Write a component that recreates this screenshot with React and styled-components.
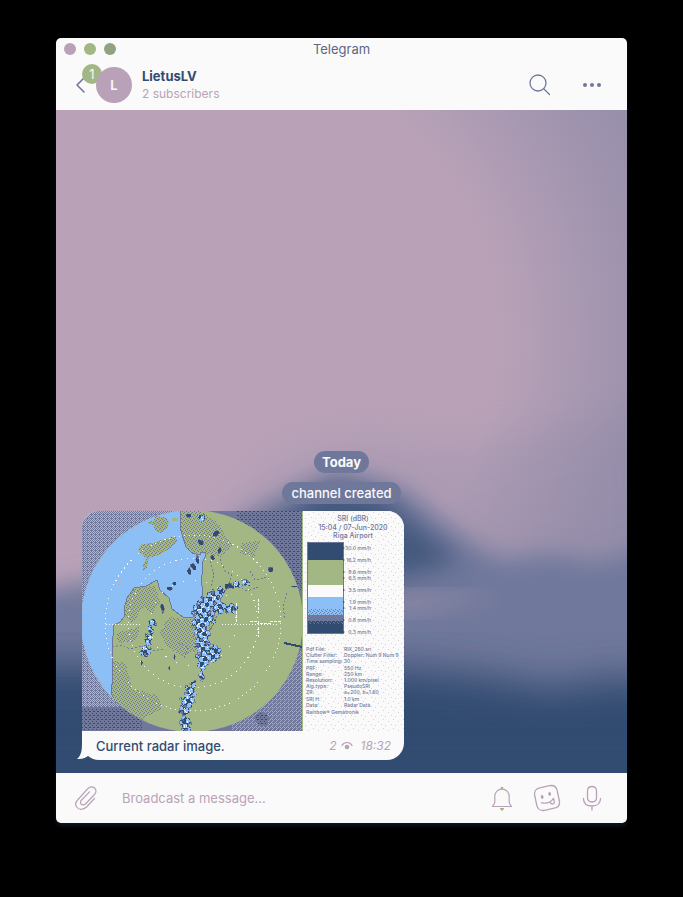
import React from "react";
import styled, { createGlobalStyle, ThemeProvider } from "styled-components";

const theme = {
  paper: "#fafafa",
  mauve: "#b9a2b8",
  slate: "#6f789b",
  navy: "#324b71",
  green: "#a3b785",
  sky: "#8cbff5",
  font: 'Inter, "Liberation Sans", sans-serif',
};

const GlobalStyle = createGlobalStyle`
  * { box-sizing: border-box; }
  body { margin: 0; background: #000; font-family: ${theme.font}; }
  button { border: 0; padding: 0; background: none; font: inherit; color: inherit; cursor: pointer; }
  h1, h2, p { margin: 0; font: inherit; }
  svg { display: block; }
`;

const Desktop = styled.div`
  min-height: 100vh;
  display: flex;
  padding: 38px 56px 74px;
`;

const Window = styled.div`
  flex: 1;
  min-width: 0;
  display: flex;
  flex-direction: column;
  border-radius: 5px;
  overflow: hidden;
  background: ${(p) => p.theme.paper};
  box-shadow: 0 4px 4px -1px rgba(50, 75, 113, 0.3);
`;

const TitleBar = styled.div`
  display: grid;
  grid-template-columns: 1fr auto 1fr;
  align-items: center;
  height: 22px;
  padding: 0 8px;
  color: #5f6682;
  font-size: 13px;
  line-height: 22px;
`;

const Lights = styled.div`
  display: flex;
  gap: 8px;
`;

const Light = styled.button`
  width: 12px;
  height: 12px;
  border-radius: 50%;
  background: ${(p) => p.$fill};
`;

const Header = styled.header`
  display: flex;
  align-items: center;
  height: 50px;
  padding: 0 23px 0 18px;
`;

const BackButton = styled.button`
  position: relative;
  width: 22px;
  height: 36px;
  display: flex;
  align-items: center;
  color: ${(p) => p.theme.slate};
`;

const Badge = styled.span`
  position: absolute;
  left: 8px;
  top: -3px;
  width: 20px;
  height: 20px;
  border-radius: 50%;
  background: ${(p) => p.theme.green};
  color: ${(p) => p.theme.paper};
  font-size: 13px;
  line-height: 20px;
  text-align: center;
`;

const Avatar = styled.div`
  position: relative;
  width: 36px;
  height: 36px;
  border-radius: 50%;
  background: ${(p) => p.theme.mauve};
  color: ${(p) => p.theme.paper};
  font-size: 13px;
  font-weight: 600;
  line-height: 36px;
  text-align: center;
`;

const Identity = styled.div`
  flex: 1;
  margin-left: 10px;
  padding-bottom: 2px;
`;

const ChannelName = styled.h1`
  color: ${(p) => p.theme.navy};
  font-size: 13px;
  font-weight: 700;
  line-height: 18px;
`;

const Subscribers = styled.p`
  color: ${(p) => p.theme.mauve};
  font-size: 12px;
  line-height: 17px;
`;

const Actions = styled.div`
  display: flex;
  gap: 28px;
  color: ${(p) => p.theme.slate};
`;

const IconButton = styled.button`
  width: ${(p) => p.$size || 24}px;
  height: 28px;
  display: grid;
  place-items: center;
  flex: none;
`;

const Chat = styled.main`
  position: relative;
  isolation: isolate;
  flex: 1;
  display: flex;
  flex-direction: column;
  justify-content: flex-end;
  padding: 0 26px 13px;
`;

const Wallpaper = styled.svg`
  position: absolute;
  inset: 0;
  z-index: -1;
  width: 100%;
  height: 100%;
`;

const Pill = styled.p`
  align-self: center;
  margin-bottom: ${(p) => p.$gap}px;
  padding: 0 ${(p) => p.$pad}px;
  border-radius: 11px;
  background: ${(p) => p.theme.slate};
  color: ${(p) => p.theme.paper};
  font-size: 13px;
  font-weight: ${(p) => p.$weight};
  line-height: 22px;
`;

const Bubble = styled.article`
  position: relative;
  align-self: flex-start;
  width: 322px;
  max-width: 100%;
  border-radius: 17px;
  background: ${(p) => p.theme.paper};
`;

const Tail = styled.svg`
  position: absolute;
  left: -5px;
  bottom: 0;
`;

const Picture = styled.svg`
  position: relative;
  width: 100%;
  height: auto;
  border-radius: 17px 17px 0 0;
`;

const CaptionRow = styled.div`
  display: flex;
  align-items: center;
  justify-content: space-between;
  height: 29px;
  padding: 0 13px 0 14px;
`;

const Caption = styled.p`
  color: ${(p) => p.theme.navy};
  font-size: 13px;
  font-weight: 500;
  line-height: 18px;
`;

const Meta = styled.div`
  display: flex;
  align-items: center;
  gap: 4px;
  color: ${(p) => p.theme.mauve};
  font-size: 12px;
  font-style: italic;
  line-height: 18px;
`;

const Time = styled.time`
  margin-left: 4px;
`;

const Composer = styled.form`
  display: flex;
  align-items: center;
  height: 50px;
  padding: 0 23px 0 18px;
  color: ${(p) => p.theme.mauve};
`;

const MessageInput = styled.input`
  flex: 1;
  min-width: 0;
  margin: 0 16px 0 24px;
  padding: 0;
  border: 0;
  outline: 0;
  background: none;
  color: ${(p) => p.theme.navy};
  font: 13px/20px ${(p) => p.theme.font};
  &::placeholder { color: ${(p) => p.theme.mauve}; opacity: 1; }
`;

const Tools = styled.div`
  display: flex;
  gap: 18px;
`;

const stroke = { fill: "none", stroke: "currentColor", strokeLinecap: "round", strokeLinejoin: "round" };

function ChatWallpaper() {
  return (
    <Wallpaper viewBox="0 0 571 663" preserveAspectRatio="none" aria-hidden="true">
      <defs>
        <radialGradient id="haze" gradientUnits="userSpaceOnUse" cx="150" cy="230" r="500">
          <stop offset="0.58" stopColor={theme.slate} stopOpacity="0" />
          <stop offset="0.84" stopColor={theme.slate} stopOpacity="0.34" />
          <stop offset="1" stopColor={theme.slate} stopOpacity="0.5" />
        </radialGradient>
        <filter id="soft" x="-20%" y="-20%" width="140%" height="140%"><feGaussianBlur stdDeviation="12" /></filter>
        <filter id="softer" x="-20%" y="-20%" width="140%" height="140%"><feGaussianBlur stdDeviation="20" /></filter>
      </defs>
      <rect width="571" height="663" fill={theme.mauve} />
      <rect width="571" height="500" fill="url(#haze)" />
      <path d="M150 430 L220 350 L300 325 L400 335 L600 300 V480 H150Z" fill={theme.slate} opacity="0.16" filter="url(#softer)" />
      <path d="M-60 490 L120 455 L200 400 L285 360 L350 382 L410 430 L445 449 L500 444 L540 453 L630 430 V720 H-60Z" fill={theme.slate} filter="url(#soft)" />
      <path d="M180 440 L270 376 L325 386 L360 415 L405 452 L330 470 L180 480Z" fill={theme.navy} opacity="0.7" filter="url(#soft)" />
      <path d="M335 482 L450 486 L340 505Z" fill={theme.mauve} opacity="0.45" filter="url(#soft)" />
      <path d="M-60 555 H330 L430 565 L500 578 L540 568 L630 570 V720 H-60Z" fill={theme.navy} filter="url(#softer)" />
      <path d="M-60 620 H630 V720 H-60Z" fill={theme.navy} filter="url(#soft)" />
    </Wallpaper>
  );
}

/* Rain cells: x, y, horizontal radius, vertical radius */
const CELLS = [
  [131, 86, 8, 8], [125, 92, 9, 8], [119, 99, 10, 9], [136, 96, 9, 7], [147, 97, 8, 5], [117, 112, 8, 9],
  [125, 107, 9, 8], [120, 122, 9, 9], [120, 134, 8, 9], [131, 142, 8, 9], [122, 146, 9, 8],
  [120, 153, 5, 7], [119, 164, 3, 6], [111, 173, 3, 5], [108, 180, 6, 8], [105, 190, 8, 8], [102, 199, 6, 5],
  [103, 213, 6, 9], [148, 74, 4, 3], [154, 73, 5, 4], [163, 71, 5, 4], [188, 58, 3, 3], [70, 111, 5, 4],
  [68, 119, 3, 6], [66, 128, 4, 7], [63, 139, 6, 6], [115, 48, 2, 4], [111, 55, 3, 4], [107, 60, 2, 4], [87, 77, 4, 2],
  [92, 72, 2, 2], [80, 97, 2, 5], [119, 6, 4, 4], [118, 31, 3, 3], [134, 22, 4, 3],
  [106, 4, 3, 2], [137, 39, 2, 3], [130, 46, 2, 3], [92, 146, 1, 3], [87, 157, 1, 2], [138, 80, 4, 5],
  [212, 75, 3, 1], [144, 75, 2, 3], [59, 151, 1, 3],
];

function seeded(seed) {
  let s = seed;
  return () => {
    s = (s * 16807) % 2147483647;
    return s / 2147483647;
  };
}

function buildEcho() {
  const next = seeded(4127);
  const layers = { navy: "", sky: "", slate: "", paper: "" };
  CELLS.forEach(([cx, cy, rx, ry]) => {
    const big = rx * ry > 14;
    for (let y = -ry; y <= ry; y += 1) {
      for (let x = -rx; x <= rx; x += 1) {
        const px = cx + x;
        const py = cy + y;
        const rough = Math.sin(px * 0.9 + py * 0.5) + Math.cos(py * 0.8 - px * 0.6);
        const d = (x * x) / (rx * rx) + (y * y) / (ry * ry) + rough * 0.25 + next() * 0.35;
        if (d > 1.05) continue;
        let key = d > 0.8 ? "slate" : "navy";
        if (big && d < 0.7 && rough + next() < 0.5) key = "sky";
        if (big && d < 0.3 && next() > 0.78) key = "paper";
        layers[key] += `M${px} ${py}h1v1h-1z`;
      }
    }
  });
  return layers;
}

const ECHO = buildEcho();

const SCALE = [
  [37, "30.0 mm/h"], [49, "16.2 mm/h"], [61, "8.6 mm/h"], [67, "6.5 mm/h"], [79, "3.5 mm/h"],
  [91, "1.9 mm/h"], [97, "1.4 mm/h"], [109, "0.8 mm/h"], [121, "0.3 mm/h"],
];

const DETAILS = [
  ["Pdf File:", "RIX_250.sri"], ["Clutter Filter:", "Doppler: Num 9 Num 9"], ["Time sampling: 30", ""],
  ["PRF:", "550 Hz"], ["Range:", "250 km"], ["Resolution:", "1.000 km/pixel"], ["Alg.type:", "PseudoSRI"],
  ["ZR:", "a=200, b=1.60"], ["SRI H:", "1.0 km"], ["Data:", "Radar Data"],
];

const SEA = "M-2 -2H99L98 6L99 20L104 36L110 42L118 44L119 41L123 41L123 46L120 52L121 60L119 68L121 82L120 90L114 98L111 106L101 106L90 98L87 87L78 79L75 69L64 75L52 77L45 87L42 98L42 106L38 111L32 114L30 136L31 165L29 182L36 196L36 222H-2Z";
const ISLANDS = "M65 12L72 9L74 5L82 6L87 11L85 18L78 22L73 19L72 14ZM56 39L59 33L70 32L82 28L94 25L95 31L87 38L78 44L67 47L65 57L61 60L61 53L65 47L60 44Z";

function RadarPicture() {
  return (
    <Picture viewBox="0 0 322 220" role="img" aria-label="Weather radar map of Riga Airport with rain intensity scale">
      <defs>
        <pattern id="dotSky" width="4" height="4" patternUnits="userSpaceOnUse"><path d="M0 0h1v1h-1zM2 0h1v1h-1zM1 1h1v1h-1zM3 1h1v1h-1zM0 2h1v1h-1zM2 2h1v1h-1zM3 3h1v1h-1z" fill={theme.sky} /></pattern>
        <pattern id="dotSlate" width="4" height="4" patternUnits="userSpaceOnUse"><path d="M0 0h1v1h-1zM2 1h1v1h-1zM1 2h1v1h-1zM3 3h1v1h-1z" fill={theme.slate} /></pattern>
        <pattern id="dotNavy" width="4" height="4" patternUnits="userSpaceOnUse"><path d="M0 0h1v1h-1zM2 2h1v1h-1zM3 0h1v1h-1z" fill={theme.navy} /></pattern>
        <pattern id="dotGreen" width="4" height="4" patternUnits="userSpaceOnUse"><path d="M0 0h1v1h-1zM2 2h1v1h-1zM2 0h1v1h-1zM1 3h1v1h-1zM3 1h1v1h-1z" fill={theme.green} /></pattern>
        <pattern id="dotMauve" width="10" height="9" patternUnits="userSpaceOnUse"><path d="M1 1h1v1h-1zM6 3h1v1h-1zM3 7h1v1h-1zM9 6h1v1h-1z" fill={theme.mauve} /></pattern>
        <clipPath id="scope"><circle cx="110" cy="110" r="111" /></clipPath>
        <clipPath id="frame"><rect width="221" height="220" /></clipPath>
      </defs>
      <rect width="322" height="220" fill={theme.paper} />
      <g clipPath="url(#frame)" shapeRendering="crispEdges">
        <rect width="221" height="220" fill={theme.slate} />
        <rect width="100" height="196" fill="url(#dotSky)" />
        <rect x="155" width="66" height="80" fill="url(#dotNavy)" />
        <rect y="198" width="60" height="22" fill="url(#dotNavy)" />
        <rect x="150" y="140" width="71" height="80" fill="url(#dotGreen)" />
        <circle cx="180" cy="208" r="7" fill={theme.slate} />
        <circle cx="180" cy="208" r="6" fill="url(#dotNavy)" />
        <g clipPath="url(#scope)">
          <rect width="222" height="222" fill={theme.green} />
          <path d="M99 0H118L136 12L150 34L138 46L122 42L108 42L99 22ZM52 78L72 74L78 90L70 105L62 96L50 112L42 104L45 88ZM86 106L100 108L114 108L114 140L100 146L84 134L78 122ZM30 150L44 152L50 178L76 184L80 198L58 210L30 196ZM34 122L58 116L54 130L36 132ZM160 32L178 30L172 46L158 42Z" fill="url(#dotSlate)" />
          <path d={SEA} fill={theme.sky} stroke={theme.slate} strokeWidth="1" />
          <path d="M90 7H96V10H90Z" fill={theme.green} />
          <path d={ISLANDS} fill={theme.green} />
          <path d={ISLANDS} fill="url(#dotSlate)" />
          <path d="M30 136l10 -2l8 4l12 -3l9 5l14 -2M138 48l5 12l7 4l-3 9M142 80l10 -6l13 6l12 -4M168 60l5 9l14 -3M205 82l-4 12l2 15M128 50l4 14l-3 11M96 132l10 4l-4 12" fill="none" stroke={theme.slate} strokeDasharray="2 2" />
          <g fill="none" stroke={theme.paper}>
            <circle cx="111" cy="112" r="88" strokeDasharray="1 4" />
            <circle cx="111" cy="112" r="65" strokeDasharray="1 5" />
            <circle cx="111" cy="112" r="43" strokeDasharray="1 11" />
            <path d="M24 113H58M140 113H196" strokeDasharray="1 2" />
            <path d="M168 110h8v2h13M188 110h12M154 92v20M176 88v14M176 116v10" strokeDasharray="3 1" />
          </g>
          <path d="M196 112h24M200 110h12" stroke={theme.mauve} strokeDasharray="2 1" />
          <path d="M36 74l4 -4M190 138l8 4M180 160l-12 10M70 120l5 14" stroke={theme.mauve} strokeDasharray="1 2" />
          <circle cx="110" cy="110" r="110" fill="none" stroke={theme.mauve} strokeDasharray="1 6" />
        </g>
        <path d={ECHO.slate} fill={theme.slate} />
        <path d={ECHO.navy} fill={theme.navy} />
        <path d={ECHO.sky} fill={theme.sky} />
        <path d={ECHO.paper} fill={theme.paper} />
        <path d="M202 132l5 1l13 3" fill="none" stroke={theme.navy} strokeWidth="2" />
        <path d="M220 0V220" stroke={theme.green} />
      </g>
      <rect x="222" y="0" width="100" height="220" fill="url(#dotMauve)" opacity="0.5" />
      <g fontFamily={theme.font} fill={theme.slate} fontWeight="500">
        <g fontSize="7" textAnchor="middle">
          <text x="271" y="10">SRI (dBR)</text>
          <text x="271" y="19">15:04 / 07-Jun-2020</text>
          <text x="271" y="27">Riga Airport</text>
        </g>
        <g shapeRendering="crispEdges">
          <rect x="225" y="31" width="36" height="18" fill={theme.navy} />
          <rect x="225" y="49" width="36" height="25" fill={theme.green} />
          <rect x="225" y="74" width="36" height="12" fill={theme.paper} />
          <rect x="225" y="86" width="36" height="18" fill={theme.sky} />
          <rect x="225" y="98" width="36" height="12" fill="url(#dotSlate)" />
          <rect x="225" y="104" width="36" height="6" fill={theme.slate} />
          <rect x="225" y="110" width="36" height="12" fill={theme.navy} />
          <rect x="225" y="110" width="36" height="3" fill="url(#dotSlate)" />
          <rect x="225" y="31" width="36" height="91" fill="none" stroke={theme.slate} />
        </g>
        <g fontSize="5">
          {SCALE.map(([y, label]) => (
            <g key={label}>
              <path d={`M261 ${y - 1}l2 1l-2 1z`} fill={theme.navy} />
              <text x="289" y={y + 2} textAnchor="end">{label}</text>
            </g>
          ))}
          {DETAILS.map(([name, value], i) => (
            <g key={name}>
              <text x="224" y={140 + Math.round(i * 6.2)}>{name}</text>
              <text x="262" y={140 + Math.round(i * 6.2)}>{value}</text>
            </g>
          ))}
          <text x="224" y="203">Rainbow® Gematronik</text>
        </g>
      </g>
    </Picture>
  );
}

export default function App() {
  return (
    <ThemeProvider theme={theme}>
      <GlobalStyle />
      <Desktop>
        <Window>
          <TitleBar>
            <Lights>
              <Light $fill={theme.mauve} aria-label="Close" />
              <Light $fill={theme.green} aria-label="Minimize" />
              <Light $fill="#8fa381" aria-label="Zoom" />
            </Lights>
            <span>Telegram</span>
          </TitleBar>
          <Header>
            <BackButton aria-label="Back, 1 unread chat">
              <svg width="12" height="18" viewBox="0 0 12 18"><path d="M10 2L3 9L10 16" {...stroke} strokeWidth="1.600" /></svg>
              <Badge>1</Badge>
            </BackButton>
            <Avatar>L</Avatar>
            <Identity>
              <ChannelName>LietusLV</ChannelName>
              <Subscribers>2 subscribers</Subscribers>
            </Identity>
            <Actions>
              <IconButton aria-label="Search">
                <svg width="22" height="22" viewBox="0 0 22 22"><g {...stroke} strokeWidth="1.300"><circle cx="9" cy="9" r="8" /><path d="M15 15L20.500 20.500" /></g></svg>
              </IconButton>
              <IconButton aria-label="More">
                <svg width="20" height="6" viewBox="0 0 20 6" fill="currentColor"><circle cx="3" cy="3" r="2" /><circle cx="10" cy="3" r="2" /><circle cx="17" cy="3" r="2" /></svg>
              </IconButton>
            </Actions>
          </Header>
          <Chat>
            <ChatWallpaper />
            <Pill $weight={700} $pad={8} $gap={9}>Today</Pill>
            <Pill $weight={500} $pad={9} $gap={7}>channel created</Pill>
            <Bubble>
              <Tail width="20" height="20" viewBox="0 0 20 20" aria-hidden="true">
                <path d="M5 0C5 9 5 15 0 19C5 19.500 9 18 12 15L18 4Z" fill={theme.paper} />
              </Tail>
              <RadarPicture />
              <CaptionRow>
                <Caption>Current radar image.</Caption>
                <Meta>
                  <span>2</span>
                  <svg width="12" height="10" viewBox="0 0 12 10" aria-label="views"><path d="M1 4.500C3 0.500 9 0.500 11 4.500" {...stroke} strokeWidth="1.200" /><circle cx="6" cy="6" r="2.300" fill={theme.mauve} /><path d="M5 6h2v2h-2z" fill={theme.green} /></svg>
                  <Time>18:32</Time>
                </Meta>
              </CaptionRow>
            </Bubble>
          </Chat>
          <Composer onSubmit={(e) => e.preventDefault()}>
            <IconButton type="button" aria-label="Attach file">
              <svg width="24" height="26" viewBox="0 0 24 26"><path d="M20.500 13.500L12.500 22C9.500 25 5 25 3 22.500C1 20 1.500 17 4 14.500L13 4.500C15.500 1.500 18.500 1.200 20.500 3C22.500 5 22.200 7.500 20.500 9.500L12 18.500C10.500 20.200 8.500 20.300 7.300 19.200C6 18 6.300 16.500 7.600 15L15.500 6.800" {...stroke} strokeWidth="1.200" /></svg>
            </IconButton>
            <MessageInput aria-label="Message" placeholder="Broadcast a message..." />
            <Tools>
              <IconButton type="button" aria-label="Notifications">
                <svg width="22" height="25" viewBox="0 0 22 25"><path d="M11 3.200C6.500 3.200 3.800 6.500 3.800 10.500V16C3.800 18 2.500 19 1.500 20.500H20.500C19.500 19 18.200 18 18.200 16V10.500C18.200 6.500 15.500 3.200 11 3.200Z" {...stroke} strokeWidth="1.200" /><path d="M9.800 1h2.400v2h-2.400zM9 22h4v1.500h-1v1h-2v-1h-1z" fill={theme.green} /></svg>
              </IconButton>
              <IconButton type="button" $size={30} aria-label="Stickers">
                <svg width="28" height="28" viewBox="0 0 28 28">
                  <g transform="rotate(-12 14 14)">
                    <path d="M9 2.500H19C23 2.500 25.500 5 25.500 9V19C25.500 23 23 25.500 19 25.500H9C5 25.500 2.500 23 2.500 19V9C2.500 5 5 2.500 9 2.500Z" {...stroke} strokeWidth="1.300" />
                    <path d="M7.500 17.500C12 19.500 17 19 20 15.800M20.500 16.200L20 20.500C18.500 21.500 16.800 21 16.300 19.200" {...stroke} strokeWidth="1.300" />
                    <ellipse cx="9.500" cy="12" rx="1.400" ry="1.900" fill="currentColor" /><ellipse cx="17.500" cy="10.500" rx="1.400" ry="1.900" fill="currentColor" />
                  </g>
                </svg>
              </IconButton>
              <IconButton type="button" aria-label="Record voice message">
                <svg width="20" height="26" viewBox="0 0 20 26"><path d="M10 1.500C7.200 1.500 5.500 3.200 5.500 6V12.500C5.500 15.300 7.200 17 10 17C12.800 17 14.500 15.300 14.500 12.500V6C14.500 3.200 12.800 1.500 10 1.500ZM1.500 13.500C1.500 18.500 5 21 10 21C15 21 18.500 18.500 18.500 13.500M10 21V25" {...stroke} strokeWidth="1.300" /></svg>
              </IconButton>
            </Tools>
          </Composer>
        </Window>
      </Desktop>
    </ThemeProvider>
  );
}
